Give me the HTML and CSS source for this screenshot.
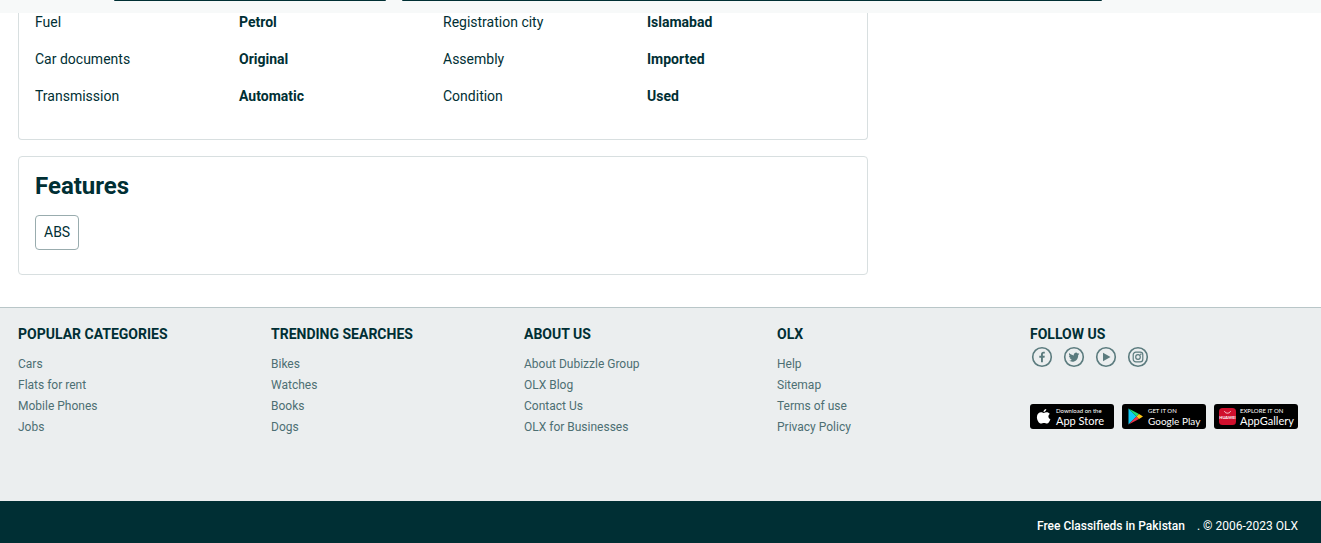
FILE: index.html
```html
<!DOCTYPE html>
<html lang="en">
<head>
<meta charset="utf-8">
<meta name="viewport" content="width=device-width, initial-scale=1">
<title>OLX Pakistan</title>
<link rel="stylesheet" href="styles.css">
</head>
<body>
<header class="topbar">
  <div class="topbar-field"></div>
  <div class="topbar-field"></div>
</header>
<main class="container listing">
  <div class="listing-main">
    <section class="card card-details">
      <dl class="details">
        <dt>Fuel</dt><dd>Petrol</dd>
        <dt>Registration city</dt><dd>Islamabad</dd>
        <dt>Car documents</dt><dd>Original</dd>
        <dt>Assembly</dt><dd>Imported</dd>
        <dt>Transmission</dt><dd>Automatic</dd>
        <dt>Condition</dt><dd>Used</dd>
      </dl>
    </section>
    <section class="card card-features">
      <h2 class="card-title">Features</h2>
      <ul class="tags"><li class="tag">ABS</li></ul>
    </section>
  </div>
</main>
<footer class="footer">
  <div class="container footer-columns">
    <nav>
      <h3 class="footer-title">POPULAR CATEGORIES</h3>
      <ul class="footer-links">
        <li><a href="#">Cars</a></li>
        <li><a href="#">Flats for rent</a></li>
        <li><a href="#">Mobile Phones</a></li>
        <li><a href="#">Jobs</a></li>
      </ul>
    </nav>
    <nav>
      <h3 class="footer-title">TRENDING SEARCHES</h3>
      <ul class="footer-links">
        <li><a href="#">Bikes</a></li>
        <li><a href="#">Watches</a></li>
        <li><a href="#">Books</a></li>
        <li><a href="#">Dogs</a></li>
      </ul>
    </nav>
    <nav>
      <h3 class="footer-title">ABOUT US</h3>
      <ul class="footer-links">
        <li><a href="#">About Dubizzle Group</a></li>
        <li><a href="#">OLX Blog</a></li>
        <li><a href="#">Contact Us</a></li>
        <li><a href="#">OLX for Businesses</a></li>
      </ul>
    </nav>
    <nav>
      <h3 class="footer-title">OLX</h3>
      <ul class="footer-links">
        <li><a href="#">Help</a></li>
        <li><a href="#">Sitemap</a></li>
        <li><a href="#">Terms of use</a></li>
        <li><a href="#">Privacy Policy</a></li>
      </ul>
    </nav>
    <section>
      <h3 class="footer-title">FOLLOW US</h3>
      <div class="social">
        <a href="#"><svg class="social-icon" viewBox="0 0 24 24"><circle class="ring" cx="12" cy="12" r="9.3"/><path d="M11 17.2v-4.5H9.3v-1.9H11V9.3c0-1.7 1-2.6 2.5-2.6h1.3v1.8h-1c-.7 0-.9.3-.9.9v1.4h1.9l-.3 1.9h-1.6v4.5z"/></svg></a>
        <a href="#"><svg class="social-icon" viewBox="0 0 24 24"><circle class="ring" cx="12" cy="12" r="9.3"/><path d="M17.3 8.7c-.4.2-.8.3-1.2.4.4-.3.8-.7.9-1.2-.4.2-.9.4-1.4.5a2.2 2.2 0 0 0-3.8 2C10 10.300 8.400 9.400 7.300 8.100c-.6 1-.3 2.300.7 3-.4 0-.7-.1-1-.3 0 1.100.7 2 1.800 2.300-.3.1-.7.1-1 0 .3.900 1.100 1.500 2.100 1.600-.9.700-2 1.100-3.200.9 4.600 2.800 9.700-.1 9.500-5.700.4-.3.800-.7 1.100-1.200z"/></svg></a>
        <a href="#"><svg class="social-icon" viewBox="0 0 24 24"><circle class="ring" cx="12" cy="12" r="9.3"/><path d="M9 7.800 16.500 12 9 16.200z"/></svg></a>
        <a href="#"><svg class="social-icon" viewBox="0 0 24 24"><circle class="ring" cx="12" cy="12" r="9.3"/><rect class="line" x="7.200" y="7.200" width="9.600" height="9.600" rx="2.600"/><circle class="line" cx="12" cy="12" r="2.300"/><circle cx="14.800" cy="9.200" r=".8"/></svg></a>
      </div>
      <div class="stores">
        <a class="store" href="#">
          <svg class="store-icon" viewBox="0 0 17 17"><path fill="#fff" d="M11.300 1c.1 1.500-1.200 3.100-2.800 3.100C8.300 2.600 9.700 1.100 11.300 1zM14.800 5.900c-2.100 1.400-1.700 4.400.6 5.300-.5 1.500-1.800 4.400-3.500 4.400-1 0-1.500-.6-2.900-.6s-1.900.6-2.900.6C4 15.600 1.900 12.100 1.900 9.200c0-4.200 3.500-5.600 5.500-4.600 1.100.6 1.500.5 2.800 0 1.500-.8 3.600-.2 4.600 1.300z"/></svg>
          <span class="store-text"><small>Download on the</small><b>App Store</b></span>
        </a>
        <a class="store store-play" href="#">
          <svg class="store-icon" viewBox="0 0 17 17"><path fill="#11c9f5" d="M1.500.5v16L9.500 8.500z"/><path fill="#22df76" d="M1.500.5 12 6 9.500 8.500z"/><path fill="#ef3449" d="M1.500 16.500 12 11 9.500 8.500z"/><path fill="#ffc814" d="M12 6 16 8.500 12 11 9.500 8.500z"/></svg>
          <span class="store-text"><small>GET IT ON</small><b>Google Play</b></span>
        </a>
        <a class="store" href="#">
          <svg class="store-icon" viewBox="0 0 17 17"><rect width="17" height="17" rx="3.500" fill="#d00f2d"/><path d="M5.500 3.200c.6 2.600 5.400 2.600 6 0" fill="none" stroke="#fff" stroke-width=".8"/><text class="brand" x="8.500" y="11">HUAWEI</text></svg>
          <span class="store-text"><small>EXPLORE IT ON</small><b>AppGallery</b></span>
        </a>
      </div>
    </section>
  </div>
  <div class="legal">
    <div class="container legal-row">
      <a href="#">Free Classifieds in Pakistan</a>
      <span>. © 2006-2023 OLX</span>
    </div>
  </div>
</footer>
</body>
</html>
```
FILE: styles.css
```css
* { box-sizing: border-box; }
body {
  margin: 0;
  background: #fff;
  color: #002f34;
  font: 14px/18px Roboto, "Liberation Sans", sans-serif;
}
ul, dl, dd, h2, h3 { margin: 0; padding: 0; }
ul { list-style: none; }
a { color: inherit; text-decoration: none; }
svg { display: block; }

.container { padding: 0 23px 0 18px; }

.topbar {
  display: grid;
  grid-template-columns: 272px 1fr;
  gap: 16px;
  padding: 0 219px 12px 114px;
  background: #f7f9f9;
}
.topbar-field { height: 1px; border-radius: 0 0 1px 1px; background: #002f34; }

.listing {
  display: grid;
  grid-template-columns: 2fr 1fr;
  gap: 5px;
  padding-bottom: 32px;
}
.listing-main { display: grid; gap: 16px; }
.card { border: 1px solid #d8dfe0; border-radius: 4px; padding: 16px; }
.card-details {
  border-top: 0;
  border-radius: 0 0 4px 4px;
  padding-top: 0;
  padding-bottom: 34px;
}
.details {
  display: grid;
  grid-template-columns: repeat(4, 1fr);
  row-gap: 19px;
}
.details dd { font-weight: 700; }
.card-features { padding: 14px 16px 24px; }
.card-title { font-size: 24px; line-height: 30px; margin-bottom: 14px; }
.tags { display: flex; flex-wrap: wrap; gap: 8px; }
.tag {
  padding: 8px;
  line-height: 17px;
  border: 1px solid #99acae;
  border-radius: 4px;
}

.footer { border-top: 1px solid #b9c6c8; background: #ebeeef; }
.footer-columns {
  display: grid;
  grid-template-columns: repeat(4, 1fr) 268px;
  padding-top: 17px;
  padding-bottom: 63px;
}
.footer-title { font-size: 14px; line-height: 18px; }
.footer-links {
  margin-top: 11px;
  font-size: 12px;
  line-height: 21px;
  color: #4d6f73;
}
.social { display: flex; gap: 8px; color: #5b7b7e; margin: 2px 0 35px; }
.social-icon { width: 24px; height: 24px; fill: currentColor; }
.ring, .line { fill: none; stroke: currentColor; }
.ring { stroke-width: 1.6px; }
.line { stroke-width: 1.2px; }

.stores { display: grid; grid-template-columns: repeat(3, 1fr); gap: 8px; }
.store {
  display: flex;
  align-items: center;
  gap: 4px;
  height: 25px;
  padding-left: 5px;
  border-radius: 3px;
  background: #000;
  color: #fff;
  font-family: Lato, sans-serif;
  white-space: nowrap;
}
.store-icon { flex: none; width: 17px; height: 17px; }
.store-text { display: grid; }
.store-text small { font-size: 6px; line-height: 8px; }
.store-text b { font-size: 11px; line-height: 12px; font-weight: 400; }
.store-play .store-text b { font-size: 10px; }
.brand { fill: #fff; font: 700 4px Lato, sans-serif; text-anchor: middle; }

.legal { background: #002f34; color: #fff; font-size: 12px; }
.legal-row {
  display: flex;
  justify-content: flex-end;
  gap: 12px;
  padding-top: 16px;
  padding-bottom: 8px;
}
.legal a { font-weight: 500; }
```
